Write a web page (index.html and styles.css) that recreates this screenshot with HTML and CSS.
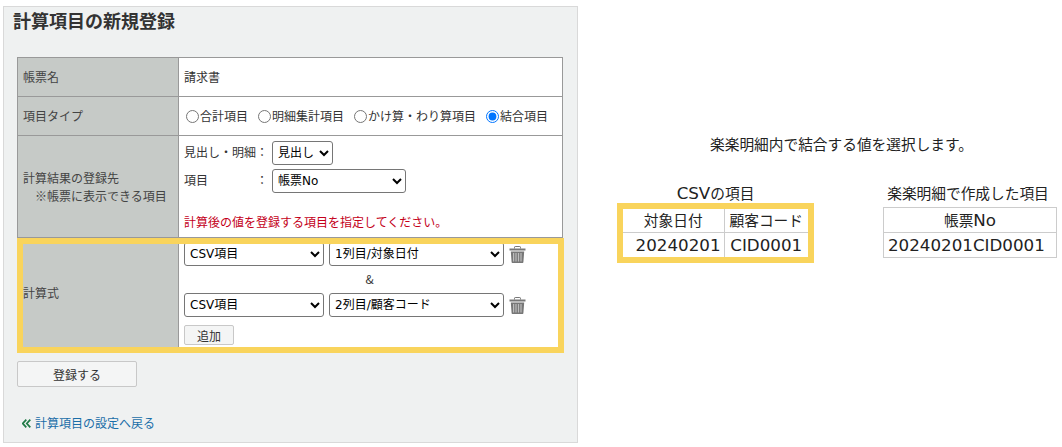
FILE: index.html
```html
<!DOCTYPE html>
<html lang="ja">
<head>
<meta charset="utf-8">
<title>計算項目の新規登録</title>
<link rel="stylesheet" href="styles.css">
</head>
<body>
<div class="page">
  <section class="panel">
    <h1 class="title">計算項目の新規登録</h1>
    <table class="form">
      <tr class="row-name">
        <th>帳票名</th>
        <td>請求書</td>
      </tr>
      <tr class="row-type">
        <th>項目タイプ</th>
        <td>
          <div class="radios">
            <label class="radio"><input type="radio" name="t">合計項目</label>
            <label class="radio"><input type="radio" name="t">明細集計項目</label>
            <label class="radio"><input type="radio" name="t">かけ算・わり算項目</label>
            <label class="radio"><input type="radio" name="t" checked>結合項目</label>
          </div>
        </td>
      </tr>
      <tr class="row-dest">
        <th>計算結果の登録先<br><span class="note">※帳票に表示できる項目</span></th>
        <td>
          <div class="dest-line">
            <span class="dest-label">見出し・明細</span><span class="colon">：</span>
            <select class="sel sel-head"><option>見出し</option></select>
          </div>
          <div class="dest-line">
            <span class="dest-label">項目</span><span class="colon">：</span>
            <select class="sel sel-item"><option>帳票No</option></select>
          </div>
          <p class="warn">計算後の値を登録する項目を指定してください。</p>
        </td>
      </tr>
      <tr class="row-formula">
        <th>計算式</th>
        <td class="formula-cell">
          <div class="formula-line">
            <select class="sel sel-src"><option>CSV項目</option></select>
            <select class="sel sel-col"><option>1列目/対象日付</option></select>
            <svg class="trash" viewBox="0 0 17 17" aria-hidden="true"><path d="M5.500 2.500V1.200c0-.4.300-.7.700-.7h4.600c.4 0 .7.300.7.700v1.300" fill="none" stroke="#777" stroke-width="1"/><path d="M.5 2.500h16V4.500H.5z" fill="#777"/><path d="M1.800 5.500h13.400l-.8 10.400c0 .7-.5 1.100-1.100 1.100H3.700c-.6 0-1.100-.4-1.100-1.100z" fill="#777"/><path d="M4.600 7v8.500M7 7v8.500M9.500 7v8.500M12 7v8.500" stroke="#bdbdbd" stroke-width="1.200"/></svg>
          </div>
          <div class="amp">&amp;</div>
          <div class="formula-line">
            <select class="sel sel-src"><option>CSV項目</option></select>
            <select class="sel sel-col"><option>2列目/顧客コード</option></select>
            <svg class="trash" viewBox="0 0 17 17" aria-hidden="true"><path d="M5.500 2.500V1.200c0-.4.300-.7.700-.7h4.600c.4 0 .7.300.7.700v1.300" fill="none" stroke="#777" stroke-width="1"/><path d="M.5 2.500h16V4.500H.5z" fill="#777"/><path d="M1.800 5.500h13.400l-.8 10.400c0 .7-.5 1.100-1.100 1.100H3.700c-.6 0-1.100-.4-1.100-1.100z" fill="#777"/><path d="M4.600 7v8.500M7 7v8.500M9.500 7v8.500M12 7v8.500" stroke="#bdbdbd" stroke-width="1.200"/></svg>
          </div>
          <button class="btn btn-add" type="button">追加</button>
          <div class="highlight-row"></div>
        </td>
      </tr>
    </table>
    <button class="btn btn-submit" type="button">登録する</button>
    <a class="back" href="#"><svg class="back-mark" viewBox="0 0 9 9" aria-hidden="true"><path d="M4.300.7.800 4.500l3.500 3.800M8.300.7 4.800 4.500l3.500 3.800" fill="none" stroke="#1e7a45" stroke-width="1.700"/></svg>計算項目の設定へ戻る</a>
  </section>

  <aside class="side">
    <p class="lead">楽楽明細内で結合する値を選択します。</p>
    <div class="compare">
      <div class="group">
        <div class="cap"><span class="latin">CSV</span>の項目</div>
        <div class="yellow">
          <table class="mini mini-csv">
            <tr class="head"><td class="c1">対象日付</td><td class="c2">顧客コード</td></tr>
            <tr><td class="c1 num latin">20240201</td><td class="c2 latin">CID0001</td></tr>
          </table>
        </div>
      </div>
      <div class="group">
        <div class="cap cap-out">楽楽明細で作成した項目</div>
        <table class="mini mini-out">
          <tr><td>帳票<span class="latin">No</span></td></tr>
          <tr><td class="left latin">20240201CID0001</td></tr>
        </table>
      </div>
    </div>
  </aside>
</div>
</body>
</html>
```

FILE: styles.css
```css
* { box-sizing: border-box; }
html, body { margin: 0; padding: 0; background: #fff; }
body {
  font-family: "Noto Sans CJK JP", "Noto Sans", sans-serif;
  color: #333;
  font-size: 12px;
}
.page {
  display: flex;
  align-items: flex-start;
  width: 1062px;
  height: 447px;
  overflow: hidden;
  padding: 6px 0 0 3px;
}
.panel {
  width: 575px;
  height: 437px;
  flex: none;
  background: #eff1f1;
  border: 1px solid #d9d9d9;
  padding: 0 13px;
  display: flex;
  flex-direction: column;
  align-items: flex-start;
}
.title {
  margin: 1px 0 0 -4px;
  font-size: 18px;
  line-height: 24px;
  font-weight: 700;
  color: #333;
  height: 49px;
}
.form {
  border-collapse: collapse;
  width: 546px;
  table-layout: fixed;
  background: #fff;
  font-size: 12px;
  line-height: 18px;
}
.form th, .form td {
  border: 1px solid #999;
  padding: 0 5px;
  font-weight: 400;
  text-align: left;
  vertical-align: middle;
}
.form th {
  width: 161px;
  background: #c6cac7;
  color: #444;
}
.row-name { height: 39px; }
.row-type { height: 39px; }
.row-dest { height: 102px; }
.row-dest td { vertical-align: top; padding-top: 5px; }
.note { padding-left: 12px; }
.radios { display: flex; align-items: center; gap: 8px; white-space: nowrap; }
.radio { display: flex; align-items: center; }
.radio input { margin: 0 1px 0 2px; width: 13px; height: 13px; }
.dest-line { display: flex; align-items: center; height: 24px; margin-bottom: 4px; }
.dest-label { width: 72px; position: relative; top: -1px; }
.colon { width: 16px; position: relative; top: -1px; }
.sel {
  height: 24px;
  font-family: "DejaVu Sans", "Noto Sans CJK JP", sans-serif;
  font-size: 12px;
  color: #000;
  background: #fff;
  border: 1px solid #767676;
  border-radius: 3px;
  padding: 0 0 0 1px;
}
.sel-head { width: 61px; }
.sel-item { width: 134px; }
.warn { margin: 20px 0 0; color: #c4001a; line-height: 18px; }
.formula-cell { position: relative; padding: 4px 5px 0 !important; vertical-align: top !important; height: 113px; }
.row-formula th { height: 113px; padding: 0 5px 2px; }
.formula-line { display: flex; align-items: center; gap: 5px; }
.sel-src { width: 140px; }
.sel-col { width: 175px; }
.trash { width: 17px; height: 17px; flex: none; margin-top: 1px; }
.amp { text-align: center; height: 27px; line-height: 25px; width: 320px; padding-left: 51px; }
.highlight-row {
  position: absolute;
  left: -162px;
  top: 0;
  width: 547px;
  height: 115px;
  border: 6px solid #f9d45c;
  pointer-events: none;
}
.btn {
  font-family: inherit;
  font-size: 12px;
  color: #333;
  background: #f4f5f5;
  border: 1px solid #c8c8c8;
  border-radius: 2px;
  padding: 0;
}
.btn-add { display: block; width: 50px; height: 20px; margin-top: 8px; }
.btn-submit { width: 120px; height: 26px; margin-top: 10px; }
.back {
  margin-top: 27px;
  color: #1a6ea8;
  text-decoration: none;
  font-size: 12px;
  line-height: 18px;
  padding-left: 5px;
  display: flex;
  align-items: center;
}
.back-mark { width: 9px; height: 9px; margin-right: 4px; flex: none; }
.side { flex: none; width: 440px; margin-left: 39px; }
.lead {
  margin: 128px 0 0;
  font-size: 14.7px;
  line-height: 20px;
  text-align: center;
  padding-left: 9px;
  color: #222;
}
.compare { display: flex; justify-content: space-between; align-items: flex-start; margin-top: 29px; color: #222; }
.cap { font-size: 14.7px; line-height: 20px; text-align: center; height: 20px; white-space: nowrap; }
.cap-out { padding-right: 4px; }
.latin { font-family: "DejaVu Sans", sans-serif; font-size: 16.7px; }
.yellow { border: 6px solid #f9d45c; width: 197px; height: 60px; }
.mini { border-collapse: collapse; table-layout: fixed; font-size: 14.7px; line-height: 20px; background: #fff; }
.mini td { border: 1px solid #ccc; padding: 0; text-align: center; height: 25px; white-space: nowrap; overflow: hidden; }
.mini .num { text-align: right; padding-right: 3px; }
.mini .left { text-align: left; padding-left: 4px; }
.mini-csv { width: 185px; height: 48px; }
.mini-csv .c1 { width: 101px; }
.mini-csv .head td { height: 23px; border-top: 0; }
.mini-csv tr:last-child td { border-bottom: 0; height: 24px; }
.mini-csv .c1 { border-left: 0; }
.mini-csv .c2 { border-right: 0; }
.mini-out { width: 174px; margin-top: 4px; }
.group { flex: none; }
```
